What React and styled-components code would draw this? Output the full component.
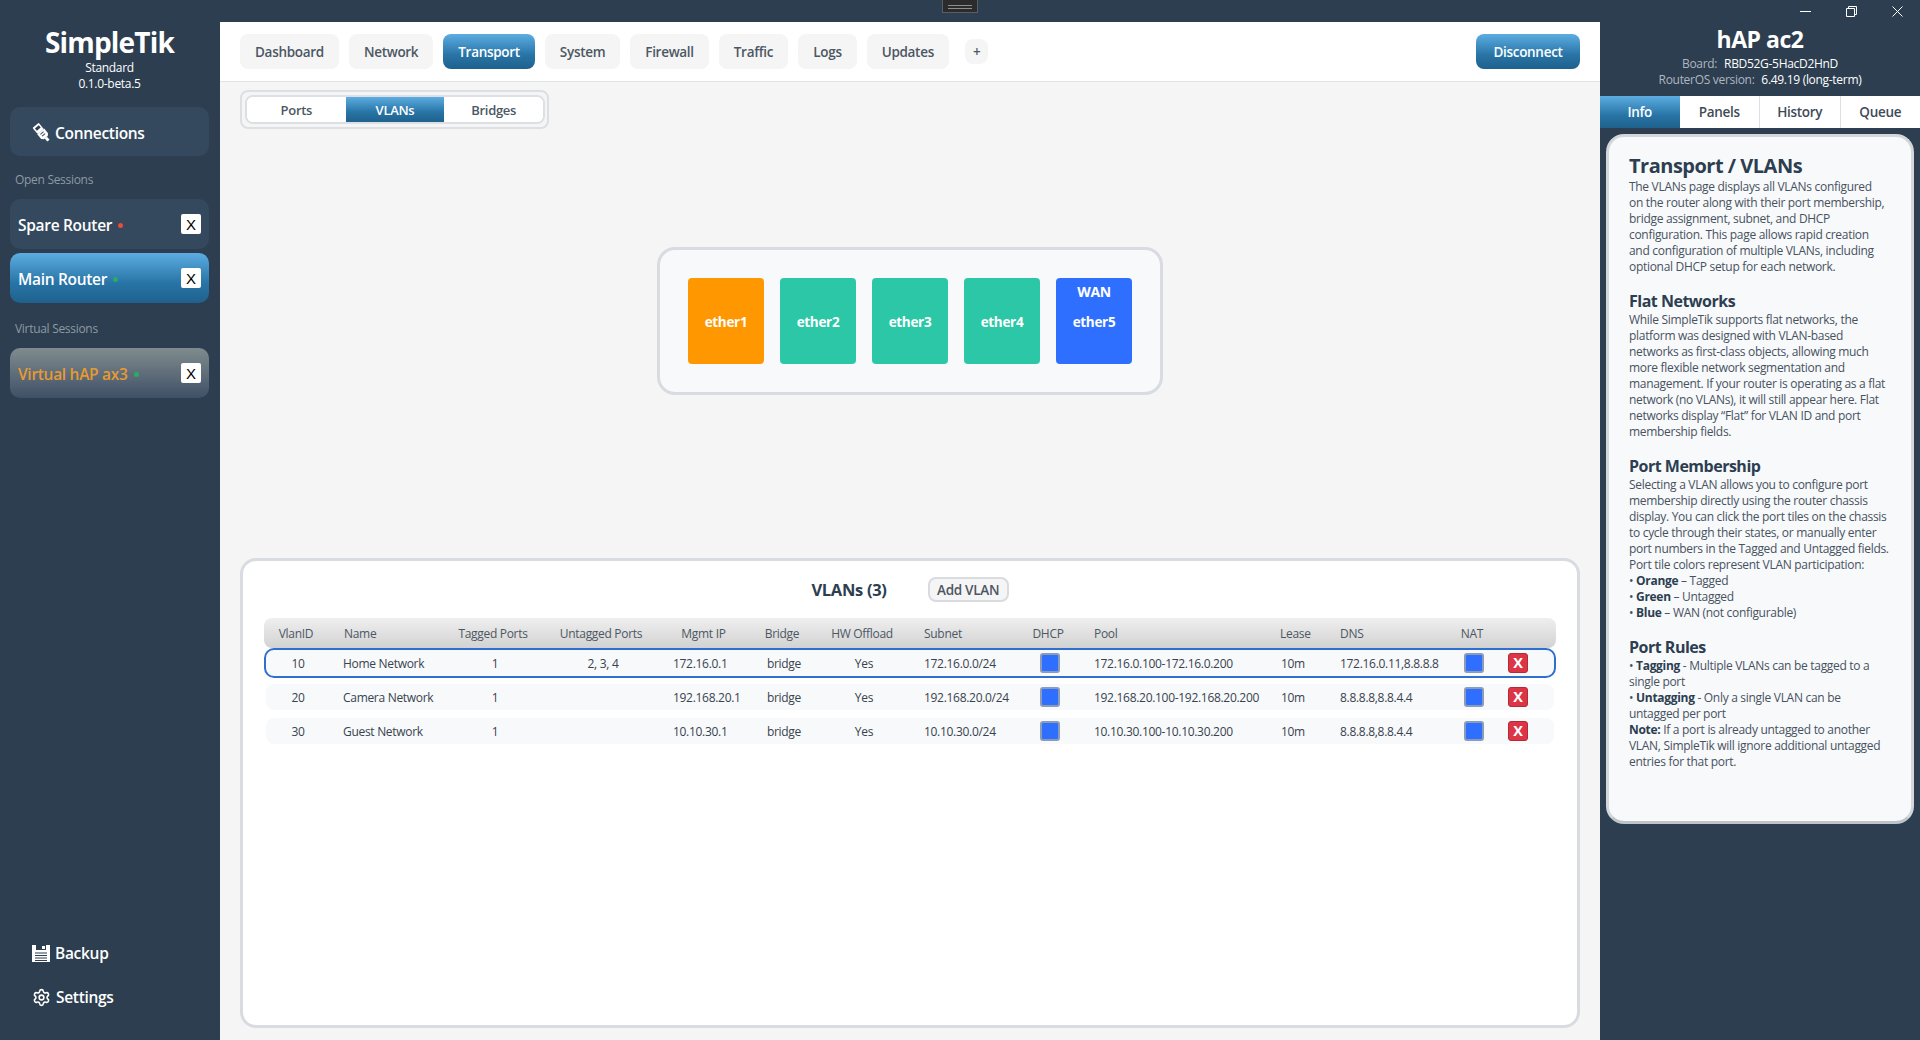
import React from 'react';
import styled, { createGlobalStyle } from 'styled-components';
import { Settings } from 'lucide-react';

const GlobalStyle = createGlobalStyle`
    html, body {
        margin: 0;
        padding: 0;
        height: 1040px;
        overflow: hidden;
        background: #2c3e50;
    }
    body {
        font-family: "Open Sans", "Noto Sans", sans-serif;
        font-size: 12px;
        letter-spacing: -0.3px;
    }
    * { box-sizing: border-box; }
`;

const activeGradient = 'linear-gradient(180deg, #5dade2 0%, #2874a6 60%, #1f618d 100%)';

const Window = styled.div`
    width: 1920px;
    height: 1040px;
    display: flex;
    flex-direction: column;
    overflow: hidden;
    background: #2c3e50;
    position: relative;
`;

const TitleBar = styled.div`
    height: 22px;
    flex: none;
    display: flex;
    justify-content: flex-end;
    color: #fff;
`;

const Notch = styled.div`
    position: absolute;
    left: 942px;
    top: 0;
    width: 36px;
    height: 13px;
    background: #2b2b2b;
    border: 1px solid #5a5f66;
    border-top: none;
    display: flex;
    flex-direction: column;
    align-items: center;
    justify-content: center;
    gap: 2px;
    padding-top: 1px;

    i {
        display: block;
        width: 24px;
        height: 1px;
        background: #8d8d8d;
    }
`;

const WinButton = styled.div`
    width: 46px;
    height: 22px;
    display: flex;
    align-items: center;
    justify-content: center;
`;

const Body = styled.div`
    flex: 1;
    display: flex;
    min-height: 0;
`;

/* ---------- sidebar ---------- */

const Sidebar = styled.aside`
    width: 220px;
    flex: none;
    display: flex;
    flex-direction: column;
    padding: 2px 11px 0 10px;
    color: #fff;
`;

const Brand = styled.div`
    text-align: center;
    line-height: 16px;
    font-size: 12px;
    margin-bottom: 15px;

    h1 {
        margin: 0;
        font-size: 28px;
        line-height: 36px;
        font-weight: 700;
        letter-spacing: -0.8px;
    }
`;

const ConnectionsButton = styled.div`
    height: 49px;
    background: #34495e;
    border-radius: 10px;
    display: flex;
    align-items: center;
    padding: 2px 0 0 22px;
    gap: 3px;
    font-size: 15.5px;
    font-weight: 600;
`;

const SectionLabel = styled.div`
    color: #8c9aa3;
    font-size: 12px;
    line-height: 16px;
    padding-left: 5px;
    margin: ${(p) => p.$top}px 0 ${(p) => p.$bottom}px;
`;

const SessionItem = styled.div`
    height: 50px;
    margin-bottom: 4px;
    border-radius: 10px;
    display: flex;
    align-items: center;
    justify-content: space-between;
    padding: 0 8px;
    font-size: 15.5px;
    font-weight: 600;
    background: ${(p) =>
        p.$kind === 'active' ? activeGradient :
        p.$kind === 'virtual' ? 'linear-gradient(180deg, #7f8c8d 0%, #5d6b79 55%, #3f5066 100%)' : '#34495e'};
    color: ${(p) => (p.$kind === 'virtual' ? '#e79a31' : '#fff')};
`;

const SessionName = styled.span`
    display: flex;
    align-items: center;
    gap: 6px;
    padding-top: 2px;
`;

const StatusDot = styled.i`
    width: 5px;
    height: 5px;
    border-radius: 50%;
    margin-top: 1px;
    background: ${(p) => (p.$up ? '#27ae60' : '#e74c3c')};
`;

const CloseBox = styled.span`
    width: 20px;
    height: 20px;
    background: #fff;
    color: #000;
    border-radius: 2px;
    display: flex;
    align-items: center;
    justify-content: center;
    font-size: 15px;
    font-weight: 400;
    font-family: "Liberation Sans", sans-serif;
    letter-spacing: 0;
`;

const SidebarFooter = styled.div`
    margin-top: auto;
    padding: 0 0 32px 22px;
    display: flex;
    flex-direction: column;
    gap: 22px;
`;

const FooterLink = styled.div`
    height: 22px;
    display: flex;
    align-items: center;
    gap: 5px;
    font-size: 15.5px;
    font-weight: 600;
`;

/* ---------- main ---------- */

const Main = styled.main`
    flex: 1;
    min-width: 0;
    display: flex;
    flex-direction: column;
    background: #f5f5f5;
`;

const Header = styled.header`
    height: 60px;
    flex: none;
    background: #fff;
    border-bottom: 1px solid #e3e3e3;
    display: flex;
    align-items: center;
    gap: 10px;
    padding: 0 20px 1px;
`;

const NavTab = styled.div`
    height: ${(p) => (p.$small ? 25 : 35)}px;
    padding: 1px ${(p) => (p.$small ? 8 : 15)}px 0;
    margin-left: ${(p) => (p.$small ? 6 : 0)}px;
    border-radius: 8px;
    display: flex;
    align-items: center;
    font-size: 13.5px;
    font-weight: 600;
    background: ${(p) => (p.$active ? activeGradient : '#f5f5f5')};
    color: ${(p) => (p.$active ? '#fff' : '#4c5763')};
`;

const DisconnectButton = styled.div`
    margin-left: auto;
    width: 104px;
    height: 35px;
    padding-top: 1px;
    border-radius: 8px;
    display: flex;
    align-items: center;
    justify-content: center;
    font-size: 13.5px;
    font-weight: 600;
    color: #fff;
    background: ${activeGradient};
`;

const SubTabsWrap = styled.div`
    align-self: flex-start;
    margin: 8px 0 0 20px;
    width: 309px;
    height: 39px;
    padding: 3px;
    border: 2px solid #dcdfe3;
    border-radius: 8px;
`;

const SubTabs = styled.div`
    height: 29px;
    width: 300px;
    display: flex;
    overflow: hidden;
    background: #fff;
    border: 2px solid #dcdfe3;
    border-radius: 8px;
`;

const SubTab = styled.div`
    flex: 1;
    display: flex;
    align-items: center;
    justify-content: center;
    font-size: 13px;
    font-weight: 600;
    background: ${(p) => (p.$active ? activeGradient : '#fff')};
    color: ${(p) => (p.$active ? '#fff' : '#4c5763')};
`;

const ChassisArea = styled.div`
    flex: 1;
    display: flex;
    align-items: center;
    justify-content: center;
    padding-bottom: 46px;
`;

const Chassis = styled.div`
    display: flex;
    gap: 16px;
    padding: 28px;
    background: #f8f9fb;
    border: 3px solid #d8dbe0;
    border-radius: 18px;
`;

const PortTile = styled.div`
    position: relative;
    width: 76px;
    height: 86px;
    padding-top: 2px;
    border-radius: 4px;
    display: flex;
    align-items: center;
    justify-content: center;
    color: #fff;
    font-size: 13.5px;
    font-weight: 700;
    background: ${(p) => p.$color};
`;

const WanLabel = styled.span`
    position: absolute;
    top: 4px;
    left: 0;
    right: 0;
    text-align: center;
    font-size: 14px;
`;

const VlanPanel = styled.section`
    flex: none;
    height: 470px;
    margin: 0 20px 12px;
    padding: 16px 21px 0;
    background: #fff;
    border: 3px solid #d8dbe0;
    border-radius: 16px;
`;

const PanelHead = styled.div`
    height: 25px;
    margin-bottom: 16px;
    display: flex;
    align-items: center;
    justify-content: center;
    gap: 41px;
    color: #2c3e50;

    h2 {
        margin: 0;
        font-size: 16.5px;
        font-weight: 700;
    }
`;

const AddButton = styled.div`
    width: 81px;
    height: 25px;
    border: 2px solid #d8dbe0;
    border-radius: 8px;
    background: #f5f5f5;
    display: flex;
    align-items: center;
    justify-content: center;
    font-size: 13.5px;
    font-weight: 600;
    color: #4c5763;
`;

const tableColumns = '64px 110px 110px 106px 99px 58px 102px 105px 60px 190px 61px 115px 56px 56px';

const TableHead = styled.div`
    display: grid;
    grid-template-columns: ${tableColumns};
    height: 30px;
    align-items: center;
    border-radius: 8px;
    background: linear-gradient(180deg, #efefef 0%, #d2d2d2 100%);
    color: #4c5763;
    font-size: 12px;
    font-weight: 500;
`;

const TableRow = styled.div`
    display: grid;
    grid-template-columns: ${tableColumns};
    height: 30px;
    margin-bottom: 4px;
    align-items: center;
    border: 2px solid ${(p) => (p.$selected ? '#2f6fd0' : 'transparent')};
    border-radius: 10px;
    background: #f8f9fa;
    background-clip: padding-box;
    color: #37434f;
    font-size: 12px;
`;

const Cell = styled.div`
    text-align: ${(p) => (p.$center ? 'center' : 'left')};
    padding-left: ${(p) => p.$pad || 0}px;
    white-space: nowrap;
    display: ${(p) => (p.$box ? 'flex' : 'block')};
    justify-content: center;
`;

const Toggle = styled.div`
    width: 20px;
    height: 20px;
    border-radius: 3px;
    background: #2f6fff;
    border: 2px solid #8b9cb8;
`;

const DeleteButton = styled.div`
    width: 20px;
    height: 20px;
    margin-left: 6px;
    border-radius: 3px;
    background: #dc3545;
    border: 1px solid #b52a37;
    color: #fff;
    font-size: 14.5px;
    font-weight: 700;
    line-height: 18px;
    text-align: center;
    letter-spacing: 0;
`;

/* ---------- right panel ---------- */

const RightPanel = styled.aside`
    width: 320px;
    flex: none;
    display: flex;
    flex-direction: column;
`;

const DeviceInfo = styled.div`
    height: 74px;
    flex: none;
    padding-top: 1px;
    text-align: center;
    font-size: 12px;
    line-height: 16px;
    color: #fff;

    h2 {
        margin: 0;
        font-size: 23px;
        line-height: 33px;
        font-weight: 700;
        letter-spacing: -0.5px;
    }

    span { color: #aeb7c0; margin-right: 4px; }
`;

const PanelTabs = styled.div`
    height: 32px;
    flex: none;
    display: flex;
    background: #fff;
`;

const PanelTab = styled.div`
    flex: 1;
    display: flex;
    align-items: center;
    justify-content: center;
    font-size: 13.5px;
    font-weight: 600;
    border-left: ${(p) => (p.$sep ? '1px solid #dcdfe3' : 'none')};
    background: ${(p) => (p.$active ? activeGradient : '#fff')};
    color: ${(p) => (p.$active ? '#fff' : '#3f4b57')};
`;

const InfoCard = styled.div`
    height: 690px;
    margin: 6px 6px 0;
    padding: 16px 0 0 20px;
    background: #f8f9fb;
    border: 3px solid #d3d7dc;
    border-bottom-color: #bfc4ca;
    border-radius: 18px;
    color: #46525e;
    line-height: 16px;
    white-space: nowrap;

    h3 {
        margin: 0;
        padding-bottom: 2px;
        color: #2c3e50;
        font-size: 16px;
        line-height: 18px;
        font-weight: 700;
        letter-spacing: -0.5px;
    }
    h3:first-child {
        padding-bottom: 0;
        font-size: 20px;
        line-height: 26px;
    }
    p {
        margin: 0 0 17px;
    }
    b {
        color: #2c3e50;
        font-weight: 700;
    }
`;

/* ---------- icons ---------- */

const PlugIcon = () => (
    <svg width="20" height="20" viewBox="0 0 20 20">
        <g transform="rotate(-40 10 10)">
            <rect x="6" y="0" width="8" height="8" rx="1" fill="#fff" />
            <rect x="7.5" y="2" width="5" height="3" fill="#2c3e50" />
            <path d="M5.5 8h9v6l-2 2h-5l-2-2z" fill="#fff" />
            <path d="M8 10h4M8 12.5h4" stroke="#34495e" strokeWidth="1" />
            <rect x="8.5" y="16" width="3" height="4" fill="#fff" />
        </g>
    </svg>
);

const FloppyIcon = () => (
    <svg width="18" height="18" viewBox="0 0 18 18">
        <path d="M0 1h18v17H0z" fill="#fff" />
        <path d="M4 1h10v5H4z" fill="#2c3e50" />
        <path d="M10 2h3v3h-3z" fill="#fff" />
        <path d="M3 9h12M3 11.5h12M3 14h12M3 16.5h12" stroke="#2c3e50" strokeWidth="1.2" />
    </svg>
);

const MinimizeIcon = () => (
    <svg width="11" height="11" viewBox="0 0 11 11"><path d="M0 5.5h11" stroke="#fff" /></svg>
);

const RestoreIcon = () => (
    <svg width="11" height="11" viewBox="0 0 11 11" fill="none" stroke="#fff">
        <path d="M.5 2.5h8v8h-8z" />
        <path d="M2.5 2.5v-2h8v8h-2" />
    </svg>
);

const CloseIcon = () => (
    <svg width="11" height="11" viewBox="0 0 11 11" stroke="#fff"><path d="M.5.5l10 10M10.5.5l-10 10" /></svg>
);

/* ---------- data ---------- */

const navTabs = ['Dashboard', 'Network', 'Transport', 'System', 'Firewall', 'Traffic', 'Logs', 'Updates'];

const ports = [
    { name: 'ether1', color: '#ff9800' },
    { name: 'ether2', color: '#2bc7a6' },
    { name: 'ether3', color: '#2bc7a6' },
    { name: 'ether4', color: '#2bc7a6' },
    { name: 'ether5', color: '#2f6fff', wan: true },
];

const vlans = [
    { id: 10, name: 'Home Network', tagged: '1', untagged: '2, 3, 4', ip: '172.16.0.1', subnet: '172.16.0.0/24', pool: '172.16.0.100-172.16.0.200', dns: '172.16.0.11,8.8.8.8' },
    { id: 20, name: 'Camera Network', tagged: '1', untagged: '', ip: '192.168.20.1', subnet: '192.168.20.0/24', pool: '192.168.20.100-192.168.20.200', dns: '8.8.8.8,8.8.4.4' },
    { id: 30, name: 'Guest Network', tagged: '1', untagged: '', ip: '10.10.30.1', subnet: '10.10.30.0/24', pool: '10.10.30.100-10.10.30.200', dns: '8.8.8.8,8.8.4.4' },
];

const App = () => {
    return (
        <Window>
            <GlobalStyle />
            <TitleBar>
                <Notch><i /><i /></Notch>
                <WinButton><MinimizeIcon /></WinButton>
                <WinButton><RestoreIcon /></WinButton>
                <WinButton><CloseIcon /></WinButton>
            </TitleBar>
            <Body>
                <Sidebar>
                    <Brand>
                        <h1>SimpleTik</h1>
                        Standard<br />0.1.0-beta.5
                    </Brand>
                    <ConnectionsButton><PlugIcon />Connections</ConnectionsButton>
                    <SectionLabel $top={16} $bottom={11}>Open Sessions</SectionLabel>
                    <SessionItem>
                        <SessionName>Spare Router<StatusDot /></SessionName>
                        <CloseBox>X</CloseBox>
                    </SessionItem>
                    <SessionItem $kind="active">
                        <SessionName>Main Router<StatusDot $up /></SessionName>
                        <CloseBox>X</CloseBox>
                    </SessionItem>
                    <SectionLabel $top={14} $bottom={11}>Virtual Sessions</SectionLabel>
                    <SessionItem $kind="virtual">
                        <SessionName>Virtual hAP ax3<StatusDot $up /></SessionName>
                        <CloseBox>X</CloseBox>
                    </SessionItem>
                    <SidebarFooter>
                        <FooterLink><FloppyIcon />Backup</FooterLink>
                        <FooterLink><Settings size={19} strokeWidth={2} />Settings</FooterLink>
                    </SidebarFooter>
                </Sidebar>

                <Main>
                    <Header>
                        {navTabs.map((tab) => (
                            <NavTab key={tab} $active={tab === 'Transport'}>{tab}</NavTab>
                        ))}
                        <NavTab $small>+</NavTab>
                        <DisconnectButton>Disconnect</DisconnectButton>
                    </Header>
                    <SubTabsWrap>
                        <SubTabs>
                            <SubTab>Ports</SubTab>
                            <SubTab $active>VLANs</SubTab>
                            <SubTab>Bridges</SubTab>
                        </SubTabs>
                    </SubTabsWrap>
                    <ChassisArea>
                        <Chassis>
                            {ports.map((port) => (
                                <PortTile key={port.name} $color={port.color}>
                                    {port.wan && <WanLabel>WAN</WanLabel>}
                                    {port.name}
                                </PortTile>
                            ))}
                        </Chassis>
                    </ChassisArea>
                    <VlanPanel>
                        <PanelHead>
                            <h2>VLANs (3)</h2>
                            <AddButton>Add VLAN</AddButton>
                        </PanelHead>
                        <TableHead>
                            <Cell $center>VlanID</Cell>
                            <Cell $pad={16}>Name</Cell>
                            <Cell $center>Tagged Ports</Cell>
                            <Cell $center>Untagged Ports</Cell>
                            <Cell $center>Mgmt IP</Cell>
                            <Cell $center>Bridge</Cell>
                            <Cell $center>HW Offload</Cell>
                            <Cell $pad={11}>Subnet</Cell>
                            <Cell $center>DHCP</Cell>
                            <Cell $pad={16}>Pool</Cell>
                            <Cell $pad={12}>Lease</Cell>
                            <Cell $pad={11}>DNS</Cell>
                            <Cell $center>NAT</Cell>
                            <Cell />
                        </TableHead>
                        {vlans.map((vlan, i) => (
                            <TableRow key={vlan.id} $selected={i === 0}>
                                <Cell $center>{vlan.id}</Cell>
                                <Cell $pad={13}>{vlan.name}</Cell>
                                <Cell $center>{vlan.tagged}</Cell>
                                <Cell $center>{vlan.untagged}</Cell>
                                <Cell $pad={17}>{vlan.ip}</Cell>
                                <Cell $center>bridge</Cell>
                                <Cell $center>Yes</Cell>
                                <Cell $pad={9}>{vlan.subnet}</Cell>
                                <Cell $box><Toggle /></Cell>
                                <Cell $pad={14}>{vlan.pool}</Cell>
                                <Cell $pad={11}>10m</Cell>
                                <Cell $pad={9}>{vlan.dns}</Cell>
                                <Cell $box><Toggle /></Cell>
                                <Cell><DeleteButton>X</DeleteButton></Cell>
                            </TableRow>
                        ))}
                    </VlanPanel>
                </Main>

                <RightPanel>
                    <DeviceInfo>
                        <h2>hAP ac2</h2>
                        <span>Board:</span> RBD52G-5HacD2HnD<br />
                        <span>RouterOS version:</span> 6.49.19 (long-term)
                    </DeviceInfo>
                    <PanelTabs>
                        <PanelTab $active>Info</PanelTab>
                        <PanelTab>Panels</PanelTab>
                        <PanelTab $sep>History</PanelTab>
                        <PanelTab $sep>Queue</PanelTab>
                    </PanelTabs>
                    <InfoCard>
                        <h3>Transport / VLANs</h3>
                        <p>
                            The VLANs page displays all VLANs configured<br />
                            on the router along with their port membership,<br />
                            bridge assignment, subnet, and DHCP<br />
                            configuration. This page allows rapid creation<br />
                            and configuration of multiple VLANs, including<br />
                            optional DHCP setup for each network.
                        </p>
                        <h3>Flat Networks</h3>
                        <p>
                            While SimpleTik supports flat networks, the<br />
                            platform was designed with VLAN-based<br />
                            networks as first-class objects, allowing much<br />
                            more flexible network segmentation and<br />
                            management. If your router is operating as a flat<br />
                            network (no VLANs), it will still appear here. Flat<br />
                            networks display “Flat” for VLAN ID and port<br />
                            membership fields.
                        </p>
                        <h3>Port Membership</h3>
                        <p>
                            Selecting a VLAN allows you to configure port<br />
                            membership directly using the router chassis<br />
                            display. You can click the port tiles on the chassis<br />
                            to cycle through their states, or manually enter<br />
                            port numbers in the Tagged and Untagged fields.<br />
                            Port tile colors represent VLAN participation:<br />
                            • <b>Orange</b> – Tagged<br />
                            • <b>Green</b> – Untagged<br />
                            • <b>Blue</b> – WAN (not configurable)
                        </p>
                        <h3>Port Rules</h3>
                        <p>
                            • <b>Tagging</b> - Multiple VLANs can be tagged to a<br />
                            single port<br />
                            • <b>Untagging</b> - Only a single VLAN can be<br />
                            untagged per port<br />
                            <b>Note:</b> If a port is already untagged to another<br />
                            VLAN, SimpleTik will ignore additional untagged<br />
                            entries for that port.
                        </p>
                    </InfoCard>
                </RightPanel>
            </Body>
        </Window>
    );
};

export default App;
